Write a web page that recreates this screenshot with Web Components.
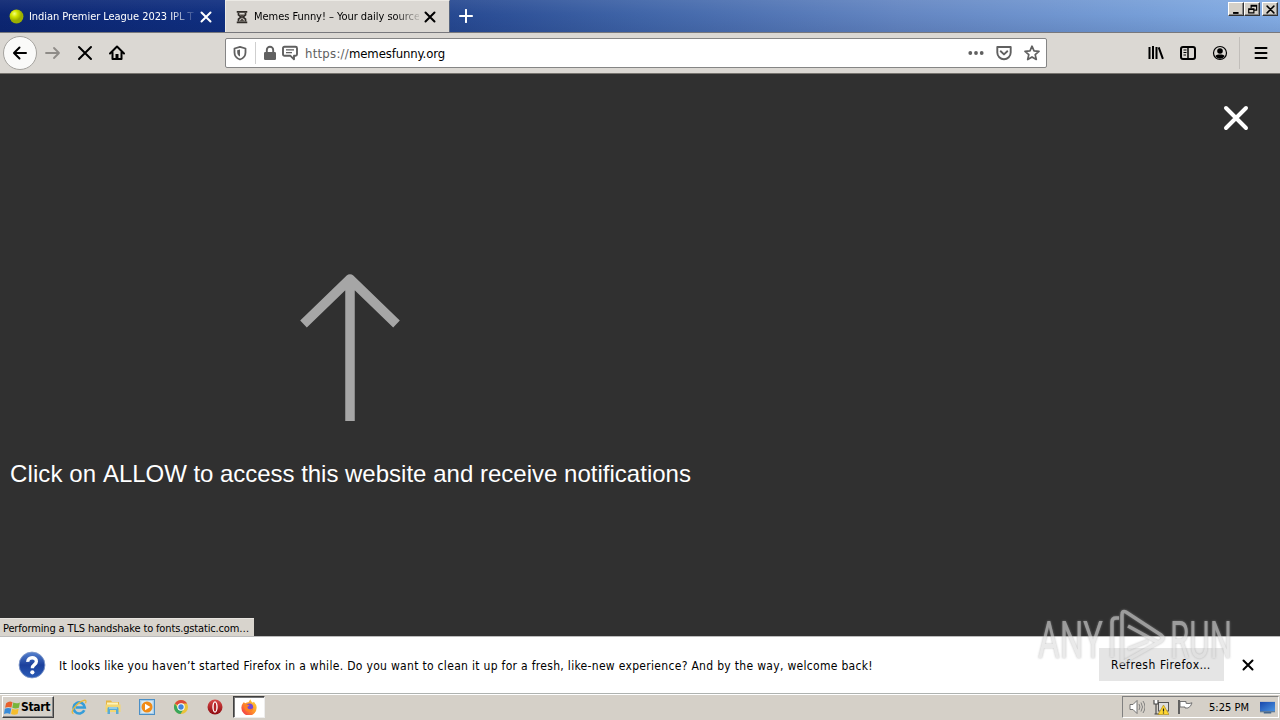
<!DOCTYPE html>
<html lang="en">
<head>
<meta charset="utf-8">
<title>Memes Funny!</title>
<style>
html,body{margin:0;height:100%;overflow:hidden}
body{font:11px "DejaVu Sans Condensed","DejaVu Sans",sans-serif;color:#000}
</style>
</head>
<body>
<desktop-screen></desktop-screen>
<script>
const define = (name, html, setup) => customElements.define(name, class extends HTMLElement {
  constructor() {
    super();
    const t = document.createElement('template');
    t.innerHTML = '<style>*{box-sizing:border-box}:host{box-sizing:border-box}svg{display:block;flex:none}</style>' + html;
    this.attachShadow({mode: 'open'}).append(t.content.cloneNode(true));
  }
  connectedCallback() { if (setup) setup(this, this.shadowRoot); }
});

// A single line of text set to a given width, by tracking or by horizontal scale.
define('fit-text', '<style>:host{display:block;white-space:pre;flex:none}span{display:inline-block;transform-origin:0 50%}</style><span></span>', (el, root) => {
  const span = root.querySelector('span');
  span.textContent = el.getAttribute('text');
  const w = +el.getAttribute('w');
  const natural = span.getBoundingClientRect().width;
  el.style.width = w + 'px';
  if (el.hasAttribute('stretch')) span.style.transform = `scaleX(${w / natural})`;
  else span.style.letterSpacing = (w - natural) / span.textContent.length + 'px';
});

const icons = {
  back: '<path d="M14 8H2.5M7.5 2.5 2 8l5.500 5.500" fill="none" stroke="currentColor" stroke-width="2" stroke-linecap="round" stroke-linejoin="round"/>',
  fwd: '<path d="M1 8h13M9 3l5 5-5 5" fill="none" stroke="currentColor" stroke-width="1.800" stroke-linecap="round" stroke-linejoin="round"/>',
  x: '<path d="M2 2l12 12M14 2 2 14" fill="none" stroke="currentColor" stroke-width="2" stroke-linecap="round"/>',
  xb: '<path d="M2 2l12 12M14 2 2 14" fill="none" stroke="currentColor" stroke-width="2.700" stroke-linecap="round"/>',
  home: '<path d="M1 8.500 8 1.500l7 7M3.500 7.500V14h9V7.500" fill="none" stroke="currentColor" stroke-width="2" stroke-linecap="round" stroke-linejoin="round"/><path d="M6.500 9h3v5h-3z"/>',
  plus: '<path d="M8 1v14M1 8h14" stroke="currentColor" stroke-width="2.300" stroke-linecap="round"/>',
  hourglass: '<path d="M2 1h12v2H2zM2 13h12v2H2z" fill="#302c28"/><path d="M4 3v2.500L7 8l-3 2.500V13M12 3v2.500L9 8l3 2.500V13" fill="none" stroke="#302c28" stroke-width="2"/><path d="M5 5h6L8 8zM5 13l3-4 3 4z" fill="#504a44"/>',
  ball: '<defs><radialGradient id="g" cx=".35" cy=".3"><stop stop-color="#f4ff80"/><stop offset=".45" stop-color="#d3e600"/><stop offset="1" stop-color="#9aae00"/></radialGradient></defs><circle cx="8" cy="8" r="7.400" fill="url(#g)"/>',
  shield: '<path d="M8 1.800 13.500 3.500v4C13.500 11 11.500 13.300 8 14.500 4.500 13.300 2.500 11 2.500 7.500v-4z" fill="none" stroke="currentColor" stroke-width="1.800" stroke-linejoin="round"/><path d="M8 4.500v7C6 10.500 5.200 9 5.200 7V5.200z"/>',
  lock: '<path d="M4.800 8V5a3.200 3.200 0 0 1 6.400 0v3" fill="none" stroke="currentColor" stroke-width="1.900"/><rect x="2" y="7" width="12" height="8" rx="1.200"/>',
  chat: '<path d="M2.500 1.800h11q1.500 0 1.500 1.500v6q0 1.500-1.500 1.500H12v3.500l-3.500-3.500h-6Q1 10.800 1 9.300v-6q0-1.500 1.500-1.500z" fill="none" stroke="currentColor" stroke-width="1.900" stroke-linejoin="round"/><path d="M4 4.800h8M4 7.700h6" stroke="currentColor" stroke-width="1.300"/>',
  dots: '<circle cx="2.300" cy="8" r="1.900"/><circle cx="8" cy="8" r="1.900"/><circle cx="13.700" cy="8" r="1.900"/>',
  pocket: '<path d="M1.300 2h13.400v5.500a6.700 6.700 0 0 1-13.400 0z" fill="none" stroke="currentColor" stroke-width="1.900" stroke-linejoin="round"/><path d="M4.700 6.300 8 9.400l3.300-3.100" fill="none" stroke="currentColor" stroke-width="1.900" stroke-linecap="round" stroke-linejoin="round"/>',
  star: '<path d="m8 1.200 2 4.600 5 .5-3.800 3.300 1.100 4.900L8 11.900l-4.300 2.600 1.100-4.900L1 6.300l5-.5z" fill="none" stroke="currentColor" stroke-width="1.700" stroke-linejoin="round"/>',
  library: '<path d="M1.500 2v12M5 1v13M8.500 2v12M10.700 2.300l4.200 11.500" stroke="currentColor" stroke-width="2" fill="none"/>',
  sidebar: '<rect x="1" y="2" width="14" height="12" rx="2" fill="none" stroke="currentColor" stroke-width="2"/><path d="M8 2v12" stroke="currentColor" stroke-width="1.500"/><path d="M3.500 5h3M3.500 7.500h3M3.500 10H6" stroke="currentColor"/>',
  account: '<circle cx="8" cy="8" r="6.500" fill="none" stroke="currentColor" stroke-width="1.200"/><circle cx="8" cy="6" r="2.800"/><path d="M3.300 11q1-1.600 3-1.600h3.400q2 0 3 1.600a5.500 5.500 0 0 1-9.400 0z"/>',
  menu: '<path d="M2.500 3h11M2.500 8h11M2.500 13h11" stroke="currentColor" stroke-width="2" stroke-linecap="round"/>',
  min: '<path d="M3 13h8" stroke="#000" stroke-width="2.800"/>',
  restore: '<path d="M6 6V2h8v7h-4M6 3h8" fill="none" stroke="#000" stroke-width="1.700"/><path d="M2.500 7h7.500v6H2.500zM2.500 8h7.500" fill="none" stroke="#000" stroke-width="1.700"/>',
  help: '<defs><linearGradient id="h" x2="0" y2="1"><stop stop-color="#5582cf"/><stop offset=".5" stop-color="#1c409c"/><stop offset="1" stop-color="#2a5cb8"/></linearGradient></defs><circle cx="8" cy="8" r="7.400" fill="url(#h)" stroke="#8098c8" stroke-width=".5"/><path d="M5.600 6.200C5.500 3.100 10.600 3.100 10.500 6 10.500 7.900 8.200 7.700 8.200 9.800" fill="none" stroke="#fff" stroke-width="1.900"/><circle cx="8.200" cy="12.200" r="1.200" fill="#fff"/>',
  flag: '<path d="M2 4q3-2.500 6-1L7 8Q4 6.800 1 8.300z" fill="#e8602c"/><path d="M8.700 3.300q3 1.500 6.300-.1l-1 5q-3 1.400-6.200 0z" fill="#78b53b"/><path d="M.8 9.200q3-1.500 6-.2l-1 5Q3 12.700 0 14z" fill="#388bd8"/><path d="M7.600 9.200q3 1.300 6.200 0l-1 5q-3 1.400-6.200 0z" fill="#f5bd2d"/>',
  ie: '<path d="M13.300 11.300A5.600 5.600 0 1 1 13.800 8.500H4.500" fill="none" stroke="#359dd9" stroke-width="2.600"/><path d="M2.500 14.500Q-.5 14 3 9 8 2.500 13 1.300q3-.5 1.500 3" fill="none" stroke="#e8b93a" stroke-width="1.300"/>',
  folder: '<path d="M1 1.500h5l1 1.500h7v9H1z" fill="#e5b544"/><path d="M2 3.500h11v5H2z" fill="#fff3b6"/><path d="M.5 5.500h15V13H.5z" fill="#f3d671"/><path d="M2.500 15V9.500q0-1.500 1.500-1.500h8q1.500 0 1.500 1.500V15H11v-4H5v4z" fill="#5aabd3"/><path d="M4 9h8" stroke="#c8edf8"/>',
  media: '<rect x=".5" y=".5" width="15" height="15" fill="#a9cde8" stroke="#4b8fc6"/><rect x="2.300" y="2" width="11.400" height="12" fill="#d8e9f2"/><circle cx="8" cy="8" r="5.500" fill="#f18b16"/><path d="M6 4.700 11.400 8 6 11.300z" fill="#fff"/>',
  chrome: '<circle cx="8" cy="8" r="7" fill="#eac33a"/><path d="M8 8 1.900 4.500A7 7 0 0 1 14.100 4.500H8z" fill="#dc493a"/><path d="M1.900 4.500A7 7 0 0 0 7.500 15l3.500-5.500H5z" fill="#39a65b"/><circle cx="8" cy="8" r="3.700" fill="#fff"/><circle cx="8" cy="8" r="2.700" fill="#4285dc"/>',
  opera: '<defs><linearGradient id="o" x2="0" y2="1"><stop stop-color="#d94a49"/><stop offset="1" stop-color="#8d080e"/></linearGradient></defs><circle cx="8" cy="8" r="7.500" fill="url(#o)"/><ellipse cx="8" cy="8" rx="2.700" ry="5.700" fill="#fff"/><ellipse cx="8" cy="8" rx="1.300" ry="4.600" fill="#b72326"/>',
  firefox: '<defs><linearGradient id="f" x1="1" x2="0" y2="1"><stop stop-color="#ffdb38"/><stop offset=".5" stop-color="#ff922b"/><stop offset="1" stop-color="#ef2450"/></linearGradient></defs><path d="M2.600 3.200 4.500 4.200Q6 3 7.500 3.200L9.300.3q.6 2.200 2.500 3.400l1-.9Q16 6 15.600 9A7.600 7.600 0 0 1 .4 9Q.2 6 2.600 3.200z" fill="url(#f)"/><circle cx="8.500" cy="8.200" r="3.600" fill="#7549d6"/><path d="M3 6q3-1.400 5.500.4L6.300 8q.5 2.500 3.200 2.200 1.700-.2 2.800-1.500-.7 4.200-4.500 4.100Q3 12 3 6z" fill="#ff8123"/>',
  sound: '<path d="M1 5.500h3L8 1.500v13l-4-4H1z" fill="#fff" stroke="#666" stroke-width=".9"/><path d="M10 5q1.800 3 0 6M12 3.500q3 4.500 0 9M14 2q4 6 0 12" fill="none" stroke="#777" stroke-width=".9"/>',
  net: '<rect x="5.500" y="3.500" width="10" height="8.500" fill="#ddd" stroke="#555"/><path d="M1 1h4v4H1z" fill="#fff"/><path d="M1 1v4h4V1M3 5v10M1.500 15h5" fill="none" stroke="#444" stroke-width="1.100"/><path d="m10.500 6 5.500 9.500H5z" fill="#ffd731" stroke="#a88410" stroke-width=".6"/><path d="M10.500 9.500v3M10.500 13.500v1" stroke="#222" stroke-width="1.200"/>',
  pennant: '<path d="M2 1v14" stroke="#555" stroke-width="1.800"/><path d="M3 2.500h6v1.800q3 .8 6-.5-1 4-4 5.200H8V8H3z" fill="#fff" stroke="#666" stroke-width=".9"/>',
  desktop: '<defs><linearGradient id="d" x2="1" y2="1"><stop stop-color="#1747ac"/><stop offset="1" stop-color="#4b94e1"/></linearGradient></defs><path d="M0 2h16v10H0z" fill="url(#d)"/><path d="M0 12h16v1H0zM4 13h8v1.500H4z" fill="#45678c"/>',
};
define('ui-icon', '<style>:host{display:block;flex:none}</style><svg viewBox="0 0 16 16" fill="currentColor"></svg>', (el, root) => {
  const s = root.querySelector('svg'), n = el.getAttribute('size') || 16;
  s.setAttribute('width', n); s.setAttribute('height', n);
  s.innerHTML = icons[el.getAttribute('name')];
});

define('browser-tab', `<style>
:host{display:flex;align-items:center;width:225px;height:33px;padding-left:9px;color:#fff}
:host([active]){height:32px;align-self:flex-end;background:#dbd8d3;color:#000;padding-left:9px;border:1px solid #eceae5;border-right-color:#56647e;border-bottom:0}
.t{width:165px;overflow:hidden;margin-left:5px;height:16px;line-height:16px;-webkit-mask-image:linear-gradient(90deg,#000 85%,#0002)}
:host([active]) .t{width:165px;margin-left:5px}
.x{margin-left:6px}:host([active]) .x{margin-left:5px}
</style><slot name="icon"></slot><div class="t"><slot></slot></div><ui-icon class="x" name="xb" size="12"></ui-icon>`);

define('tab-strip', `<style>
:host{display:flex;height:33px;background:linear-gradient(180deg,#fff1 0,#fff0 45%,#00104018 100%),linear-gradient(90deg,#0c2672 0,#102f80 220px,#24468f 430px,#4065a8 640px,#6486c2 900px,#779fd8 1150px,#84ade4 100%);border-bottom:1px solid #78787c}
.plus{margin:9px 0 0 9px;color:#fff}
.win{display:flex;margin:2px 2px 0 auto}
b{width:16px;height:14px;display:flex;align-items:center;justify-content:center;background:#d4d0c8;border:1px solid;border-color:#fff #333 #333 #fff;box-shadow:inset -1px -1px #888}
b:last-child{margin-left:2px}
</style>
<browser-tab><ui-icon slot="icon" name="ball" size="15"></ui-icon><fit-text text="Indian Premier League 2023 IPL T20" w="177"></fit-text></browser-tab>
<browser-tab active><ui-icon slot="icon" name="hourglass" size="14"></ui-icon><fit-text text="Memes Funny! – Your daily source" w="166"></fit-text></browser-tab>
<ui-icon class="plus" name="plus" size="14"></ui-icon>
<div class="win"><b><ui-icon name="min" size="11"></ui-icon></b><b><ui-icon name="restore" size="11"></ui-icon></b><b><ui-icon name="xb" size="9"></ui-icon></b></div>`);

define('address-bar', `<style>
:host{display:flex;align-items:center;width:822px;height:30px;background:#fff;border:1px solid #858585;border-radius:2px;color:#606060;padding:0 6px;font-size:13px}
i{width:1px;height:22px;background:#cfcfcf;margin:0 6px 0 7px}
.chat{margin:0 7px 0 4px}.host{color:#000}.r{display:flex;gap:12px;margin-left:auto}
</style><ui-icon name="shield"></ui-icon><i></i><ui-icon name="lock"></ui-icon><ui-icon class="chat" name="chat"></ui-icon>
<fit-text text="https://" w="44"></fit-text><fit-text class="host" text="memesfunny.org" w="96"></fit-text>
<div class="r"><ui-icon name="dots"></ui-icon><ui-icon name="pocket"></ui-icon><ui-icon name="star"></ui-icon></div>`);

define('nav-bar', `<style>
:host{display:flex;align-items:center;height:41px;background:#dbd8d3;border-bottom:1px solid #77746f;padding:0 11px 0 3px}
.back{width:34px;height:34px;border-radius:50%;background:#fafaf9;border:1px solid #a5a39f;display:flex;align-items:center;justify-content:center}
.l{display:flex;gap:16px;margin-left:8px}.l ui-icon:first-child{color:#8e8b87}
address-bar{margin-left:100px}
.r{display:flex;gap:16px;margin-left:auto}
i{width:1px;height:32px;background:#c1beba;margin:0 13px 0 11px}
</style><div class="back"><ui-icon name="back"></ui-icon></div>
<div class="l"><ui-icon name="fwd"></ui-icon><ui-icon name="x"></ui-icon><ui-icon name="home"></ui-icon></div>
<address-bar></address-bar>
<div class="r"><ui-icon name="library"></ui-icon><ui-icon name="sidebar"></ui-icon><ui-icon name="account"></ui-icon></div><i></i><ui-icon name="menu"></ui-icon>`);

define('web-page', `<style>
:host{display:block;height:562px;background:#303030;color:#fff;position:relative;overflow:hidden}
.prompt{width:700px;padding:199px 0 0 10px;font:24px/30px "Liberation Sans",Arial,sans-serif}
.arrow{margin:0 0 37px 289px}
.line{display:flex}
.close{position:absolute;right:30px;top:30px}
.status{position:absolute;left:0;bottom:0;width:254px;height:18px;padding:2px 0 0 3px;background:#d8d4cd;color:#000;line-height:15px;border-top:1px solid #e7e4df}
</style>
<div class="prompt"><svg class="arrow" width="102" height="149"><path d="M51 148V8M4.500 51 51 6l46.500 45" fill="none" stroke="#a6a6a6" stroke-width="9.500" stroke-linejoin="round"/></svg>
<div class="line"><fit-text text="Click on " w="93"></fit-text><fit-text text="ALLOW to access this " w="242"></fit-text><fit-text text="website and receive notifications" w="346"></fit-text></div></div>
<svg class="close" width="28" height="28"><path d="M4 4l20 20M24 4 4 24" stroke="#fff" stroke-width="4" stroke-linecap="round"/></svg>
<div class="status"><fit-text text="Performing a TLS handshake to fonts.gstatic.com…" w="246"></fit-text></div>`);

define('notification-bar', `<style>
:host{display:flex;align-items:center;height:57px;background:#fff;padding:0 26px 0 18px;border-top:1px solid #bbb;font-size:12px}
.m{margin-left:13px;padding-top:2px}
button{font:inherit;color:#000;border:0;padding:0 0 0 12px;width:125px;height:33px;background:#e5e5e5;margin:0 18px 1px auto;display:flex;align-items:center}
u{text-underline-offset:1px}
</style><ui-icon name="help" size="28"></ui-icon>
<fit-text class="m" text="It looks like you haven’t started Firefox in a while. Do you want to clean it up for a fresh, like-new experience? And by the way, welcome back!" w="814"></fit-text>
<button><fit-text text="R" w="8"></fit-text><u><fit-text text="e" w="7"></fit-text></u><fit-text text="fresh Firefox…" w="85"></fit-text></button>
<ui-icon name="xb" size="12"></ui-icon>`);

define('task-bar', `<style>
:host{display:flex;align-items:center;height:27px;background:#d5d0c8;border-top:1px solid #aeb2b0;box-shadow:inset 0 1px #fff;padding:0 1px 0 2px}
.start{display:flex;align-items:center;width:52px;height:22px;padding-left:1px;font-weight:bold;font-size:12px;border:1px solid;border-color:#fff #404040 #404040 #fff;box-shadow:inset -1px -1px #888}
.q{display:flex;gap:18px;margin-left:17px}
.ff{width:32px;height:22px;margin-left:10px;display:flex;align-items:center;justify-content:center;background:#fff;border:1px solid;border-color:#404040 #eee #eee #404040;box-shadow:inset 1px 1px #777}
.tray{margin-left:auto;width:157px;height:22px;display:flex;align-items:center;padding-left:6px;border:1px solid;border-color:#808080 #fff #fff #808080}
.tray ui-icon+ui-icon{margin-left:8px}.tray fit-text{margin:0 11px 0 16px}
</style>
<div class="start"><ui-icon name="flag" size="17"></ui-icon><fit-text text="Start" w="29"></fit-text></div>
<div class="q"><ui-icon name="ie"></ui-icon><ui-icon name="folder"></ui-icon><ui-icon name="media"></ui-icon><ui-icon name="chrome"></ui-icon><ui-icon name="opera"></ui-icon></div>
<div class="ff"><ui-icon name="firefox"></ui-icon></div>
<div class="tray"><ui-icon name="sound"></ui-icon><ui-icon name="net"></ui-icon><ui-icon name="pennant"></ui-icon><fit-text text="5:25 PM" w="40"></fit-text><ui-icon name="desktop" size="15"></ui-icon></div>`);

define('anyrun-mark', `<style>
:host{position:absolute;left:1038px;top:609px;width:194px;height:58px;display:flex;align-items:center;justify-content:space-between;opacity:.62;color:#dedede;font:400 51px/58px Roboto,sans-serif;filter:drop-shadow(0 0 1px #999)}
fit-text{padding-top:6px}
</style><fit-text stretch text="ANY" w="65"></fit-text>
<svg width="58" height="58" fill="none" stroke="#dedede" stroke-width="3.500"><path d="M11 9H8Q4 9 4 13v35M14 56V6q0-5 4-3l35 23q4 3 0 6L14 54M20 17l31 17M20 40l20-8"/></svg>
<fit-text stretch text="RUN" w="62"></fit-text>`);

define('desktop-screen', `<style>:host{display:flex;flex-direction:column;width:1280px;height:720px;position:relative;overflow:hidden}</style>
<tab-strip></tab-strip><nav-bar></nav-bar><web-page></web-page><notification-bar></notification-bar><task-bar></task-bar><anyrun-mark></anyrun-mark>`);
</script>
</body>
</html>
